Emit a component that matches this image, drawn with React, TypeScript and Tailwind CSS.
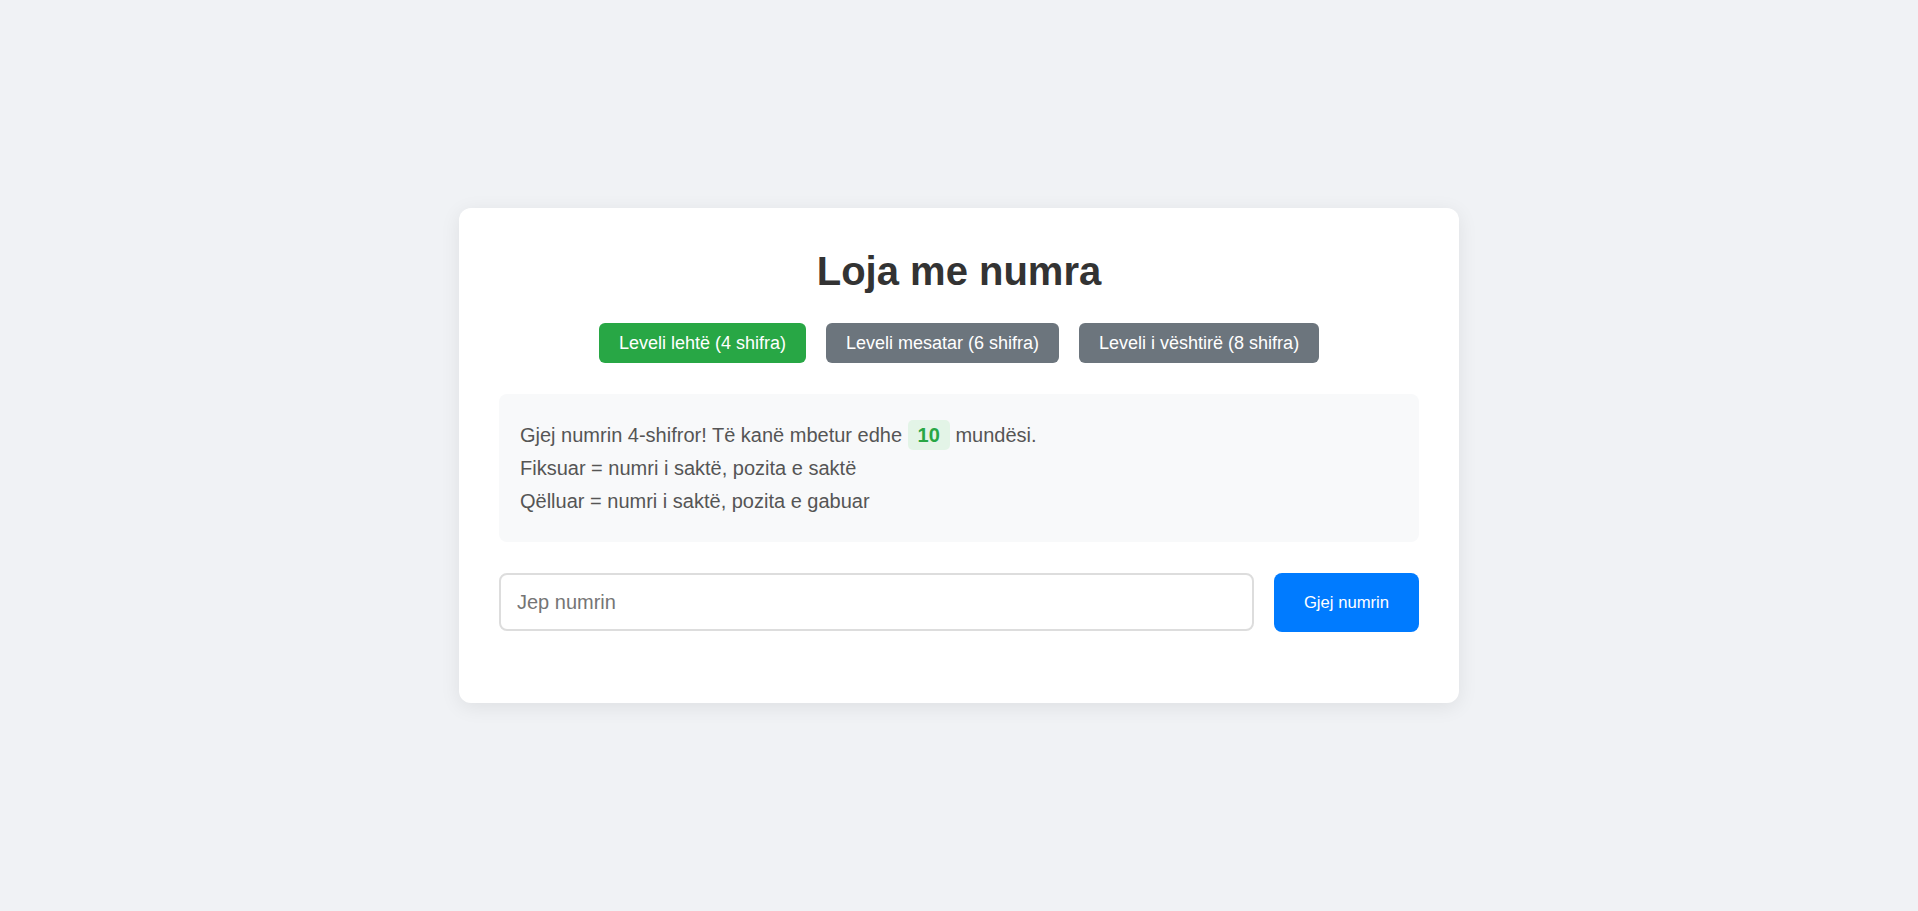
import { useState } from 'react';

const levels = [
	{ id: 4, label: 'Leveli lehtë (4 shifra)' },
	{ id: 6, label: 'Leveli mesatar (6 shifra)' },
	{ id: 8, label: 'Leveli i vështirë (8 shifra)' },
];

export default function App() {
	const [level, setLevel] = useState(4);
	const [guess, setGuess] = useState('');
	const [tries] = useState(10);

	return (
		<div className="min-h-screen flex items-center justify-center bg-[#f0f2f5] font-['Liberation_Sans',Arial,sans-serif]">
			<div className="w-[1000px] bg-white rounded-[12px] shadow-[0_4px_20px_rgba(0,0,0,0.08)] px-10 pt-10 pb-[71px]">
				<h1 className="text-center text-[40px] leading-[46px] font-bold text-[#333] mb-[29px]">Loja me numra</h1>

				<div className="flex justify-center gap-5 mb-[31px]">
					{levels.map((l) => (
						<button
							key={l.id}
							onClick={() => setLevel(l.id)}
							className={
								level === l.id
									? 'h-10 px-5 rounded-[6px] text-[18px] text-white bg-[#28a745] cursor-pointer'
									: 'h-10 px-5 rounded-[6px] text-[18px] text-white bg-[#6c757d] cursor-pointer'
							}>
							{l.label}
						</button>
					))}
				</div>

				<div className="bg-[#f8f9fa] rounded-[8px] px-[21px] pt-[25px] pb-[24px] text-[20px] leading-[33px] text-[#555] mb-[31px]">
					<p>
						Gjej numrin {level}-shifror! Të kanë mbetur edhe{' '}
						<span className="inline-block leading-[30px] px-[10px] rounded-[5px] bg-[#e3f4e7] text-[#28a745] font-bold">{tries}</span>{' '}
						mundësi.
					</p>
					<p>Fiksuar = numri i saktë, pozita e saktë</p>
					<p>Qëlluar = numri i saktë, pozita e gabuar</p>
				</div>

				<div className="flex gap-5">
					<input
						type="text"
						value={guess}
						onChange={(e) => setGuess(e.target.value)}
						placeholder="Jep numrin"
						className="flex-1 h-[58px] px-4 border-2 border-[#ddd] rounded-[8px] text-[20px] text-[#333] placeholder:text-[#757575] outline-none"
					/>
					<button className="w-[145px] h-[59px] rounded-[8px] bg-[#007bff] text-white text-[16.67px] cursor-pointer">
						Gjej numrin
					</button>
				</div>
			</div>
		</div>
	);
}
